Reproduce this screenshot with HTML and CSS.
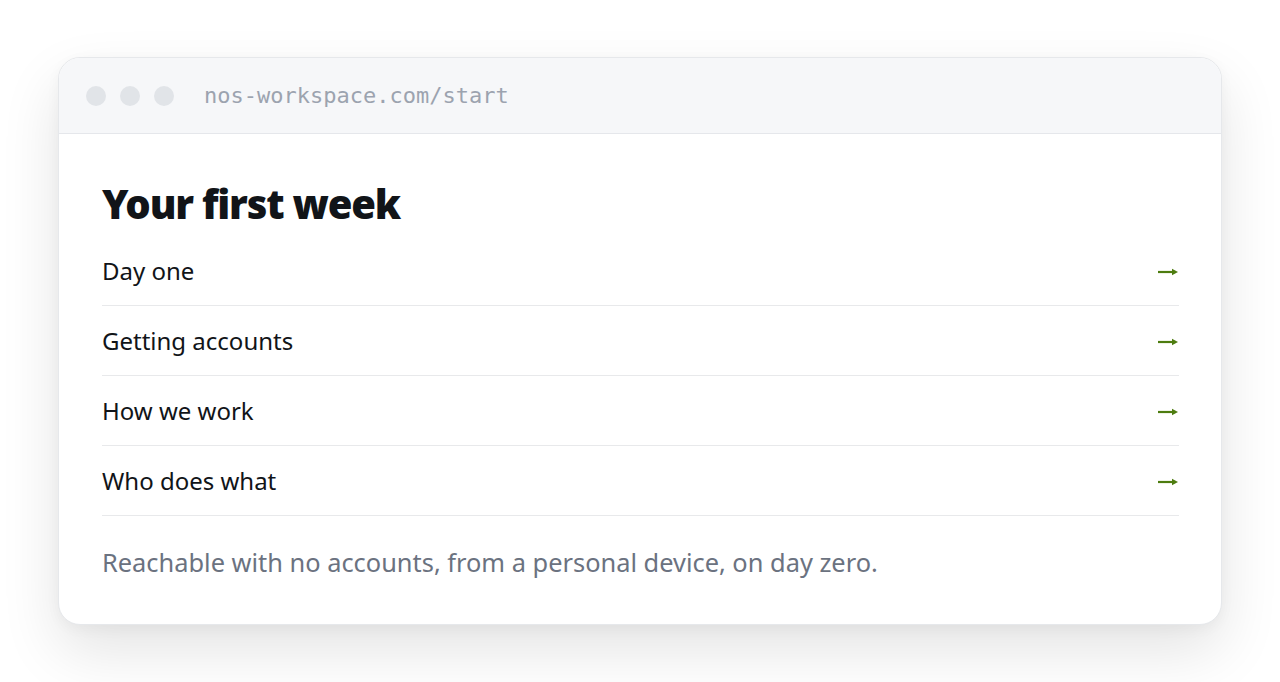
FILE: index.html
```html
<!DOCTYPE html>
<html lang="en">
<head>
<meta charset="utf-8">
<title>Your first week</title>
<link rel="stylesheet" href="styles.css">
</head>
<body>
<div class="stage">
  <div class="window">
    <div class="bar">
      <span class="dot"></span><span class="dot"></span><span class="dot"></span>
      <span class="url">nos-workspace.com/start</span>
    </div>
    <div class="content">
      <h1 class="title">Your first week</h1>
      <ul class="list">
        <li class="row"><span>Day one</span><svg class="arrow" viewBox="0 0 20 10" width="20" height="10"><path d="M0 5H15" /><path class="head" d="M14 1.8L20 5L14 8.2Z" /></svg></li>
        <li class="row"><span>Getting accounts</span><svg class="arrow" viewBox="0 0 20 10" width="20" height="10"><path d="M0 5H15" /><path class="head" d="M14 1.8L20 5L14 8.2Z" /></svg></li>
        <li class="row"><span>How we work</span><svg class="arrow" viewBox="0 0 20 10" width="20" height="10"><path d="M0 5H15" /><path class="head" d="M14 1.8L20 5L14 8.2Z" /></svg></li>
        <li class="row"><span>Who does what</span><svg class="arrow" viewBox="0 0 20 10" width="20" height="10"><path d="M0 5H15" /><path class="head" d="M14 1.8L20 5L14 8.2Z" /></svg></li>
      </ul>
      <p class="note">Reachable with no accounts, from a personal device, on day zero.</p>
    </div>
  </div>
</div>
</body>
</html>
```
FILE: styles.css
```css
* { box-sizing: border-box; }
html, body { margin: 0; padding: 0; background: #ffffff; }
body { font-family: "Noto Sans", "Open Sans", sans-serif; color: #111418; }
.stage { padding: 57px 58px 58px 58px; min-height: 100vh; }
.window {
  background: #ffffff;
  border: 1px solid #e6e8eb;
  border-radius: 22px;
  overflow: hidden;
  box-shadow: 0 26px 60px rgba(0,0,0,0.11), 0 4px 14px rgba(0,0,0,0.04);
}
.bar {
  height: 76px;
  background: #f6f7f9;
  border-bottom: 1px solid #e5e7eb;
  display: flex;
  align-items: center;
  padding-left: 27px;
  gap: 14px;
}
.dot { width: 20px; height: 20px; border-radius: 50%; background: #e1e4e8; }
.url {
  margin-left: 16px;
  font-family: "DejaVu Sans Mono", "Liberation Mono", monospace;
  font-size: 22px;
  color: #9ca3af;
}
.content { padding: 46px 42px 45px 43px; }
.title {
  margin: 0 0 8px 0;
  font-size: 40px;
  line-height: 48px;
  font-weight: 900;
  letter-spacing: -1.2px;
  color: #111418;
}
.list { list-style: none; margin: 0; padding: 0; }
.row {
  display: flex;
  justify-content: space-between;
  align-items: center;
  height: 70px;
  border-bottom: 1px solid #e8e9eb;
  font-size: 24px;
  color: #111418;
}
.arrow { margin-right: 1px; margin-top: 2px; }
.arrow path { stroke: #4d7c0f; stroke-width: 2.2; fill: none; }
.arrow .head { fill: #4d7c0f; stroke: none; }
.note {
  margin: 29px 0 0 0;
  font-size: 25.4px;
  line-height: 34px;
  color: #6b7280;
}
```
